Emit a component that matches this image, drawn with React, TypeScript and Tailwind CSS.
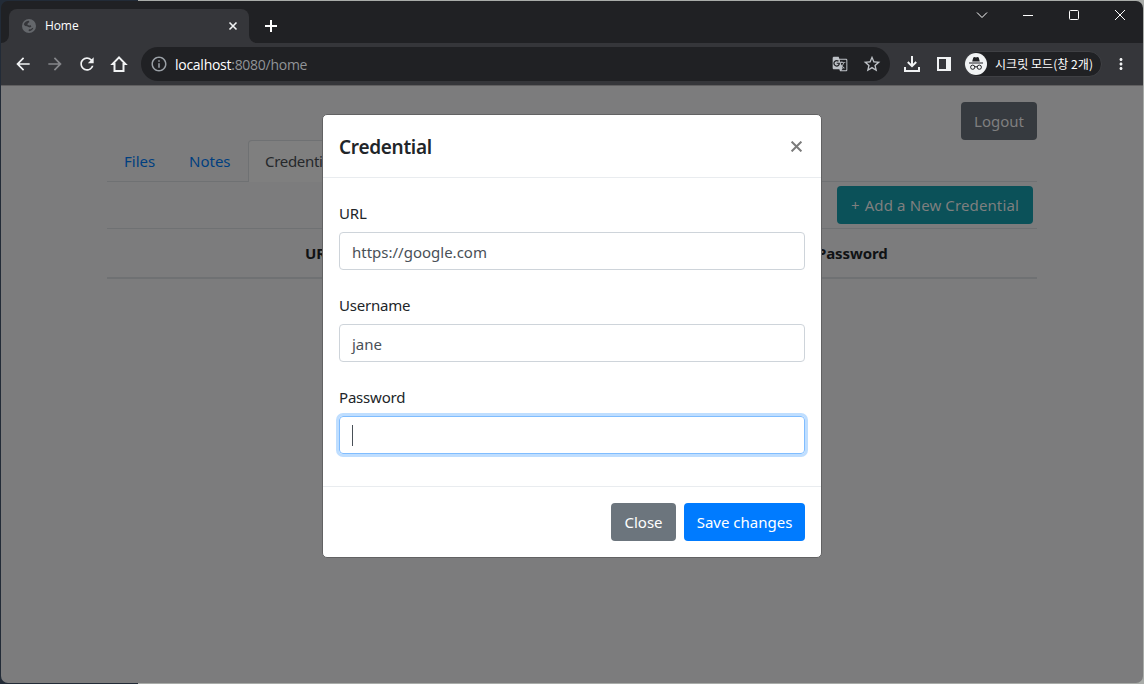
import React from "react";
import { MdArrowBack, MdArrowForward, MdRefresh, MdInfoOutline, MdGTranslate, MdStarBorder, MdMoreVert } from "react-icons/md";

function Fit({ children, className = "" }: { children: React.ReactNode; className?: string }) {
  return <span className={`whitespace-nowrap ${className}`}>{children}</span>;
}

function Globe() {
  return (
    <svg className="size-[14px]" viewBox="0 0 14 14">
      <circle cx="7" cy="7" r="7" fill="#64676b" />
      <path d="M1.8 5.2C2.6 3.2 4.6 1.8 6.8 1.8L7.4 3 5.8 4.2 5.4 5.8 7.2 6.6 8.8 6.2 9.4 7.6 8 8.6 6.4 8 5 7.2 3 7Z M8.8 10.2L10.2 9 11.4 8.8C10.9 10.6 9.4 12 7.4 12.3L6.4 11.2 7.2 10.2Z" fill="#35363a" />
    </svg>
  );
}

function TitleBar() {
  return (
    <div className="flex h-[42px] bg-[#202124] pt-2 text-white">
      <div className="flex w-2 items-end bg-[#35363a]">
        <div className="h-[34px] w-2 rounded-br-lg bg-[#202124]" />
      </div>
      <div className="flex h-[34px] w-[240px] items-center rounded-t-lg bg-[#35363a] pl-[13px] pr-[10px]">
        <Globe />
        <Fit className="ml-[9px] font-['Open_Sans'] text-xs tracking-[-0.1px]">Home</Fit>
        <svg className="ml-auto size-3" viewBox="0 0 12 12" stroke="#f1f3f4" strokeWidth="1.6"><path d="M2.5 2.5l7 7M9.5 2.5l-7 7" /></svg>
      </div>
      <div className="w-2 bg-[#35363a]"><div className="h-[34px] w-2 rounded-bl-lg bg-[#202124]" /></div>
      <svg className="ml-2 mt-[11px] size-3" viewBox="0 0 12 12" stroke="white" strokeWidth="2"><path d="M6 0v12M0 6h12" /></svg>
      <div className="-mt-px ml-auto mr-[17px] flex gap-[34px]">
        <svg className="size-3" viewBox="0 0 12 12" fill="none" stroke="white"><path d="M1 4.5l5 5 5-5" /></svg>
        <svg className="size-3" viewBox="0 0 12 12" stroke="white"><path d="M1 7.5h10" /></svg>
        <svg className="size-3" viewBox="0 0 12 12" fill="none" stroke="white"><rect x="1.5" y="2.5" width="9" height="9" rx="1" /></svg>
        <svg className="size-3" viewBox="0 0 12 12" stroke="white"><path d="M1 2l10 10M11 2L1 12" /></svg>
      </div>
    </div>
  );
}

function Toolbar() {
  return (
    <div className="flex h-[43px] items-center border-b border-[#605f60] bg-[#35363a] pl-[12px] pr-[13px] text-[#f1f3f4]">
      <div className="flex gap-3">
        <MdArrowBack className="size-5" />
        <MdArrowForward className="size-5 text-[#85868a]" />
        <MdRefresh className="size-5" />
        <svg className="size-5" viewBox="0 0 20 20" fill="none" stroke="currentColor" strokeWidth="2"><path d="M10 3.4L3.6 10H5.5V17H14.5V10H16.4Z" /></svg>
      </div>
      <div className="ml-3 flex h-[34px] w-[749px] items-center rounded-full bg-[#202124] pl-[9px] pr-2">
        <MdInfoOutline className="size-[18px] text-[#9aa0a6]" />
        <Fit className="ml-[7px] font-['Open_Sans'] text-[14px] tracking-[-0.27px] text-[#919498]"><span className="text-white">localhost</span>:8080/home</Fit>
        <MdGTranslate className="ml-auto size-4 text-[#bdc1c6]" />
        <MdStarBorder className="ml-[14px] size-5 text-[#bdc1c6]" />
      </div>
      <svg className="ml-[12px] size-5" viewBox="0 0 20 20" fill="none" stroke="currentColor" strokeWidth="2"><path d="M10 2v10M5.8 8l4.2 4.2L14.2 8M3 13v4h14v-4" /></svg>
      <svg className="ml-[15px] size-[14px]" viewBox="0 0 14 14" fill="currentColor"><path fillRule="evenodd" d="M0 0H14V14H0ZM2 2V12H9V2Z" /></svg>
      <div className="ml-[13px] flex h-[26px] w-[138px] items-center rounded-full border border-[#3f4044] bg-[#202124]">
        <svg className="size-[22px]" viewBox="0 0 22 22"><circle cx="11" cy="11" r="11" fill="#f1f3f4" /><path d="M7.2 8.4L8.3 4.5l1.4-.4 1.3.5 1.3-.5 1.4.4 1.1 3.9z" fill="#202124" /><path d="M4 10h14" stroke="#202124" strokeWidth="1.2" /><g fill="none" stroke="#202124"><circle cx="7.7" cy="14.2" r="2.1" /><circle cx="14.3" cy="14.2" r="2.1" /><path d="M9.8 14q1.2-.7 2.4 0" /></g></svg>
        <Fit className="ml-[8px] font-['Noto_Sans_CJK_KR'] text-[12px] tracking-[0.05px] text-white">시크릿 모드(창 2개)</Fit>
      </div>
      <MdMoreVert className="ml-auto size-[18px]" />
    </div>
  );
}

function Page() {
  return (
    <main className="flex-1 bg-[#7c7c7d] px-[106px] pt-[16px] text-[#121415]">
      <div className="flex justify-end">
        <button className="h-[38px] w-[76px] rounded bg-[#363a3f] text-[#7f7f7f]"><Fit>Logout</Fit></button>
      </div>
      <nav className="flex h-[42px] items-stretch border-b border-[#6f7173] text-[#003f80]">
        <a className="flex w-[65px] items-center pl-[17px] pt-[2px]">Files</a>
        <a className="flex w-[76px] items-center pl-[17px] pt-[2px]">Notes</a>
        <a className="-mb-px flex w-[112px] items-center rounded-t border border-b-0 border-[#6f7173] bg-[#7f7f7f] pl-4 tracking-[-0.3px] text-[#25282b]">Credentials</a>
      </nav>
      <div className="flex h-[47px] items-center justify-end border-b border-[#6f7173] pr-1">
        <button className="flex h-[38px] w-[196px] items-center justify-center rounded bg-[#0b5159] text-[#7f7f7f]"><Fit>+</Fit><Fit className="ml-[5px] tracking-[0.12px]">Add a New Credential</Fit></button>
      </div>
      <div className="flex h-[50px] items-center border-b-2 border-[#6f7173] font-bold text-[#101214]">
        <div className="w-[198px]" />
        <div className="w-[246px]">URL</div>
        <div className="w-[266px]">Username</div>
        <div className="tracking-[-0.1px]">Password</div>
      </div>
    </main>
  );
}

function Field({ label, value, focused }: { label: string; value: string; focused?: boolean }) {
  return (
    <div className="mb-[22px]">
      <label className="mb-[7px] block h-[25px] leading-[26px]"><Fit className="tracking-[-0.2px]">{label}</Fit></label>
      <div className={`flex h-[38px] items-center rounded border px-3 text-[#495057] ${focused ? "border-[#80bdff] shadow-[0_0_0_3px_#bfdeff]" : "border-[#ced4da]"}`}>
        {focused ? <span className="h-[21px] w-px bg-[#495057]" /> : <Fit className="pt-[2px]">{value}</Fit>}
      </div>
    </div>
  );
}

function Modal() {
  return (
    <section className="absolute left-[322px] top-[114px] flex h-[444px] w-[500px] flex-col rounded-[5px] border border-[#626263] bg-white text-[#212529]">
      <header className="flex h-[63px] items-center justify-between border-b border-[#e9ecef] px-4">
        <h5 className="pt-[2px] text-[19px] font-semibold tracking-[-0.3px]">Credential</h5>
        <svg className="mr-[3px] size-[11px]" viewBox="0 0 11 11" stroke="#7b7b7b" strokeWidth="2"><path d="M.6.6l9.8 9.8M10.4.6L.6 10.4" /></svg>
      </header>
      <div className="flex h-[308px] flex-col px-4 pt-[22px]">
        <Field label="URL" value="https://google.com" />
        <Field label="Username" value="jane" />
        <Field label="Password" value="" focused />
      </div>
      <footer className="flex flex-1 items-center justify-end gap-2 border-t border-[#e9ecef] px-4 text-white">
        <button className="h-[38px] w-[65px] rounded bg-[#6c757d]">Close</button>
        <button className="h-[38px] w-[121px] rounded bg-[#007bff]">Save changes</button>
      </footer>
    </section>
  );
}

export default function App() {
  return (
    <div className="relative h-[684px] w-[1144px] overflow-hidden bg-[linear-gradient(to_right,#222b37_138px,#a9aca9_138px)] font-['Noto_Sans',sans-serif] text-[15px]">
      <div className="flex h-full flex-col overflow-hidden rounded-lg border border-transparent">
        <TitleBar />
        <Toolbar />
        <Page />
      </div>
      <Modal />
    </div>
  );
}
